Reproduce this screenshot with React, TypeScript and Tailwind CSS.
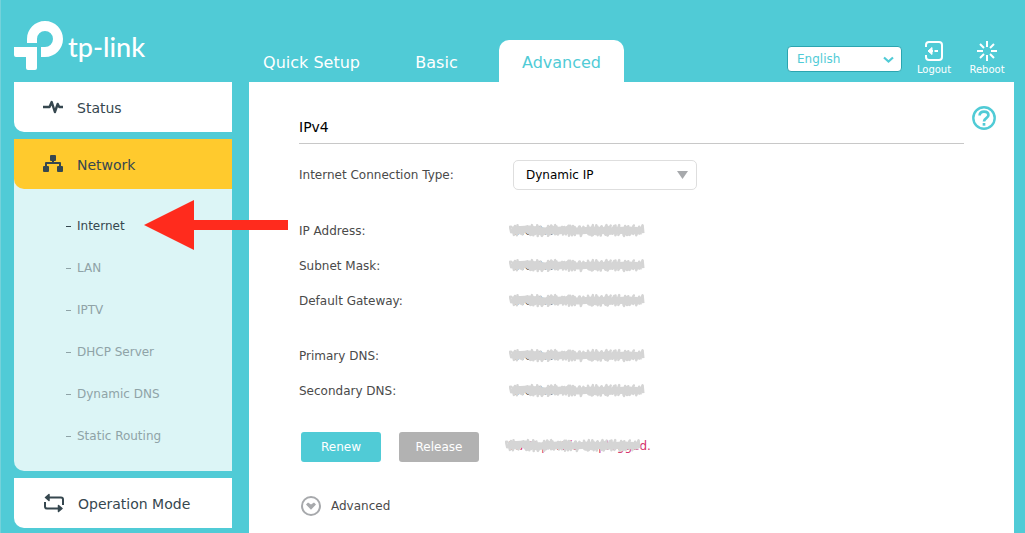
import React, { useState } from 'react';

const TABS = ['Quick Setup', 'Basic', 'Advanced'];

const NETWORK_PAGES = ['Internet', 'LAN', 'IPTV', 'DHCP Server', 'Dynamic DNS', 'Static Routing'];

const ADDRESS_GROUPS = [
  ['IP Address:', 'Subnet Mask:', 'Default Gateway:'],
  ['Primary DNS:', 'Secondary DNS:'],
];

// Rough back-and-forth marker stroke, always the same shape
const buildScribble = () => {
  let seed = 11;
  const random = () => {
    seed = (seed * 16807) % 2147483647;
    return seed / 2147483647;
  };
  let d = 'M3 6';
  for (let x = 2; x < 134; x += 1.5) {
    d += ` L${(x + random() * 4 - 1).toFixed(1)} ${(4 + random() * 4).toFixed(1)}`;
    d += ` L${(x + random() * 4 - 1).toFixed(1)} ${(11 + random() * 4).toFixed(1)}`;
  }
  return d;
};

const SCRIBBLE = buildScribble();

const LogoMark = () => (
  <svg width="50" height="49" viewBox="0 0 50 49" fill="#fff" aria-hidden="true">
    <path d="M13 22V18C13 8 21 0 31 0s18 8 18 18-8 18-18 18h-4V26h4a8 8 0 1 0-8-8v4z" />
    <path d="M0 26h23v21a2 2 0 0 1-2 2h-7a2 2 0 0 1-2-2V36H2a2 2 0 0 1-2-2z" />
  </svg>
);

const StatusIcon = () => (
  <svg width="20" height="20" viewBox="0 0 20 20" fill="none" stroke="#36474f" strokeWidth="2.400" aria-hidden="true">
    <path d="M0 10h6.500L8.700 5l3.200 10 2.800-8 1.600 3H20" strokeLinejoin="round" />
  </svg>
);

const NetworkIcon = () => (
  <svg width="20" height="20" viewBox="0 0 20 20" fill="#36474f" aria-hidden="true">
    <rect x="7" y="1" width="6" height="6" rx="1" />
    <rect x="0" y="12" width="6" height="6" rx="1" />
    <rect x="14" y="12" width="6" height="6" rx="1" />
    <path d="M9 6h2v2h6a1 1 0 0 1 1 1v4h-2v-3H4v3H2V9a1 1 0 0 1 1-1h6z" />
  </svg>
);

const ModeIcon = () => (
  <svg width="21" height="20" viewBox="0 0 21 20" fill="none" stroke="#36474f" strokeWidth="2" aria-hidden="true">
    <path d="M6 4.500h12a2 2 0 0 1 2 2V12M15 15.500H4a2 2 0 0 1-2-2V9" />
    <path d="M6 1.500l-3.500 3L6 7.500zM15.500 12.500l3.500 3-3.500 3z" fill="#36474f" strokeWidth="1.500" strokeLinejoin="round" />
  </svg>
);

const LogoutIcon = () => (
  <svg width="20" height="20" viewBox="0 0 20 20" fill="none" stroke="#fff" strokeWidth="2" aria-hidden="true">
    <path d="M2 6V4a3 3 0 0 1 3-3h10a3 3 0 0 1 3 3v12a3 3 0 0 1-3 3H5a3 3 0 0 1-3-3v-2" />
    <path d="M4 10l4-3.500v7z" fill="#fff" strokeWidth="1" />
    <path d="M7 10h2M10.500 10H14" />
  </svg>
);

const RebootIcon = () => (
  <svg width="20" height="20" viewBox="0 0 20 20" fill="none" stroke="#fff" strokeWidth="2" aria-hidden="true">
    <path d="M10 0v6M10 14v6M0 10h6M14 10h6M3 3l4 4M13 13l4 4M17 3l-4 4M7 13l-4 4" />
  </svg>
);

const HelpIcon = () => (
  <svg width="24" height="24" viewBox="0 0 24 24" fill="none" stroke="#50cbd6" aria-hidden="true">
    <circle cx="12" cy="12" r="10.700" strokeWidth="2.400" />
    <path d="M7.600 9.600C7.600 7 9.400 5.600 12 5.600s4.400 1.400 4.400 3.700c0 3-4.400 2.700-4.400 6.200" strokeWidth="2.700" />
    <path d="M12 17v2.700" strokeWidth="2.700" />
  </svg>
);

const ExpandIcon = () => (
  <svg width="20" height="20" viewBox="0 0 20 20" aria-hidden="true">
    <circle cx="10" cy="10" r="9" fill="none" stroke="#a7a9ac" strokeWidth="2" />
    <path d="M5 8.500l2-2 3 2 3-2 2 2-5 5.200z" fill="#a7a9ac" />
  </svg>
);

interface MaskedProps {
  text: string;
  className: string;
}

const Masked: React.FC<MaskedProps> = ({ text, className }) => (
  <span className={`relative inline-block leading-5 whitespace-nowrap ${className}`}>
    {text}
    <svg className="absolute top-0 -left-1" width="138" height="18" viewBox="0 0 138 18" aria-hidden="true">
      <path d={SCRIBBLE} fill="none" stroke="#d5d5d5" strokeWidth="2.500" strokeLinejoin="round" />
      <path d="M3 9L20 8l15 2 18-1 16 1 15-1 17 1 17-1 15 1" fill="none" stroke="#d5d5d5" strokeWidth="7" strokeLinejoin="round" />
    </svg>
  </span>
);

interface MenuItemProps {
  label: string;
  icon: React.ReactNode;
  active?: boolean;
}

const MenuItem: React.FC<MenuItemProps> = ({ label, icon, active }) => (
  <a
    href="#"
    className={`flex h-[50px] items-center gap-[14px] rounded-bl-[10px] pl-[29px] text-sm text-[#36474f] ${
      active ? 'bg-[#ffca2d]' : 'bg-white'
    }`}
  >
    {icon}
    <span className="pt-[2px]">{label}</span>
  </a>
);

const App: React.FC = () => {
  const [tab, setTab] = useState('Advanced');
  const [page, setPage] = useState('Internet');

  return (
    <div className="flex min-h-screen flex-col border-l border-[#74d2da] bg-[#50cbd6] pr-[11px] pl-[13px] font-['Verdana','DejaVu_Sans',sans-serif] text-xs text-[#4a4a4a]">
      <header className="flex h-[82px] shrink-0 gap-[17px]">
        <a href="#" className="flex w-[218px] shrink-0 items-start gap-1 pt-[21px] text-white">
          <LogoMark />
          <span className="pt-2 font-['Lato',sans-serif] text-[27px] leading-9 font-medium">tp-link</span>
        </a>
        <div className="flex min-w-0 flex-1 items-end justify-between">
          <nav className="flex">
            {TABS.map(name => (
              <button
                key={name}
                onClick={() => setTab(name)}
                className={`h-[42px] w-[125px] rounded-t-[10px] pt-[3px] text-base whitespace-nowrap ${
                  tab === name ? 'bg-white text-[#50cbd6]' : 'text-white'
                }`}
              >
                {name}
              </button>
            ))}
          </nav>
          <div className="flex h-[42px] pr-2">
            <div className="relative mt-[6px] mr-[11px] h-[26px] w-[115px]">
              <select
                aria-label="Language"
                className="h-full w-full appearance-none rounded-[4px] border border-[#2ba5b0] bg-white pl-[9px] text-xs text-[#50cbd6]"
              >
                <option>English</option>
              </select>
              <svg className="pointer-events-none absolute top-[10px] right-2" width="11" height="8" viewBox="0 0 11 8" aria-hidden="true">
                <path d="M1 1.500l4.500 4 4.500-4" fill="none" stroke="#50cbd6" strokeWidth="2.200" />
              </svg>
            </div>
            <button className="flex w-[42px] flex-col items-center gap-[3px] pt-px text-[10px] leading-3 text-white">
              <LogoutIcon />
              Logout
            </button>
            <button className="ml-[13px] flex w-[38px] flex-col items-center gap-[3px] pt-px text-[10px] leading-3 text-white">
              <RebootIcon />
              Reboot
            </button>
          </div>
        </div>
      </header>

      <div className="flex flex-1 gap-[17px]">
        <aside className="flex w-[218px] shrink-0 flex-col gap-[7px]">
          <MenuItem label="Status" icon={<StatusIcon />} />
          <div className="rounded-bl-[10px] bg-[#dcf5f6]">
            <MenuItem label="Network" icon={<NetworkIcon />} active />
            <ul className="pt-4 pb-[14px]">
              {NETWORK_PAGES.map(name => (
                <li key={name} className="relative">
                  <a
                    href="#"
                    onClick={() => setPage(name)}
                    className={`flex h-[42px] items-center gap-[6px] pl-[52px] ${
                      page === name ? 'text-[#36474f]' : 'text-[#8fa3a7]'
                    }`}
                  >
                    <span className="h-px w-[5px] bg-current" />
                    {name}
                  </a>
                  {name === 'Internet' && (
                    <svg
                      className="pointer-events-none absolute -top-[5px] left-[130px] z-10"
                      width="144"
                      height="50"
                      viewBox="0 0 144 50"
                      aria-hidden="true"
                    >
                      <path d="M0 25L50 0v20h94v10H50v20z" fill="#ff2b1d" />
                    </svg>
                  )}
                </li>
              ))}
            </ul>
          </div>
          <MenuItem label="Operation Mode" icon={<ModeIcon />} />
        </aside>

        <main className="min-w-0 flex-1 bg-white pt-6 pl-[50px]">
          <div className="flex gap-2 pr-[18px]">
            <h2 className="h-[38px] flex-1 border-b border-[#c8c8c8] pt-[11px] text-sm leading-5 text-black">IPv4</h2>
            <button aria-label="Help" className="h-6 w-6">
              <HelpIcon />
            </button>
          </div>

          <div className="mt-4 flex h-[30px] items-center">
            <label htmlFor="connection-type" className="w-[214px]">
              Internet Connection Type:
            </label>
            <div className="relative h-[30px] w-[184px]">
              <select
                id="connection-type"
                className="h-full w-full appearance-none rounded-[5px] border border-[#dedede] bg-white pl-3 text-xs text-black"
              >
                <option>Dynamic IP</option>
              </select>
              <svg className="pointer-events-none absolute top-[11px] right-[9px]" width="11" height="8" viewBox="0 0 11 8" aria-hidden="true">
                <path d="M0 0h11L5.500 8z" fill="#a7a9ac" />
              </svg>
            </div>
          </div>

          <div className="mt-[23px] flex flex-col gap-5">
            {ADDRESS_GROUPS.map(group => (
              <dl key={group[0]}>
                {group.map(label => (
                  <div key={label} className="flex h-[35px] items-center">
                    <dt className="w-[214px]">{label}</dt>
                    <dd>
                      <Masked text="0.0.0.0" className="text-[#4a4a4a]" />
                    </dd>
                  </div>
                ))}
              </dl>
            ))}
          </div>

          <div className="mt-6 flex h-[30px] items-center pl-[2px] text-white">
            <button className="h-[30px] w-20 rounded-[3px] bg-[#50cbd6]">Renew</button>
            <button className="ml-[18px] h-[30px] w-20 rounded-[3px] bg-[#b2b2b2]">Release</button>
            <div className="ml-[30px] pb-[3px]">
              <Masked text="WAN port is unplugged." className="text-[#d6336c]" />
            </div>
          </div>

          <button className="mt-[34px] flex items-center gap-[10px] pl-[2px]">
            <ExpandIcon />
            Advanced
          </button>
        </main>
      </div>
    </div>
  );
};

export default App;
